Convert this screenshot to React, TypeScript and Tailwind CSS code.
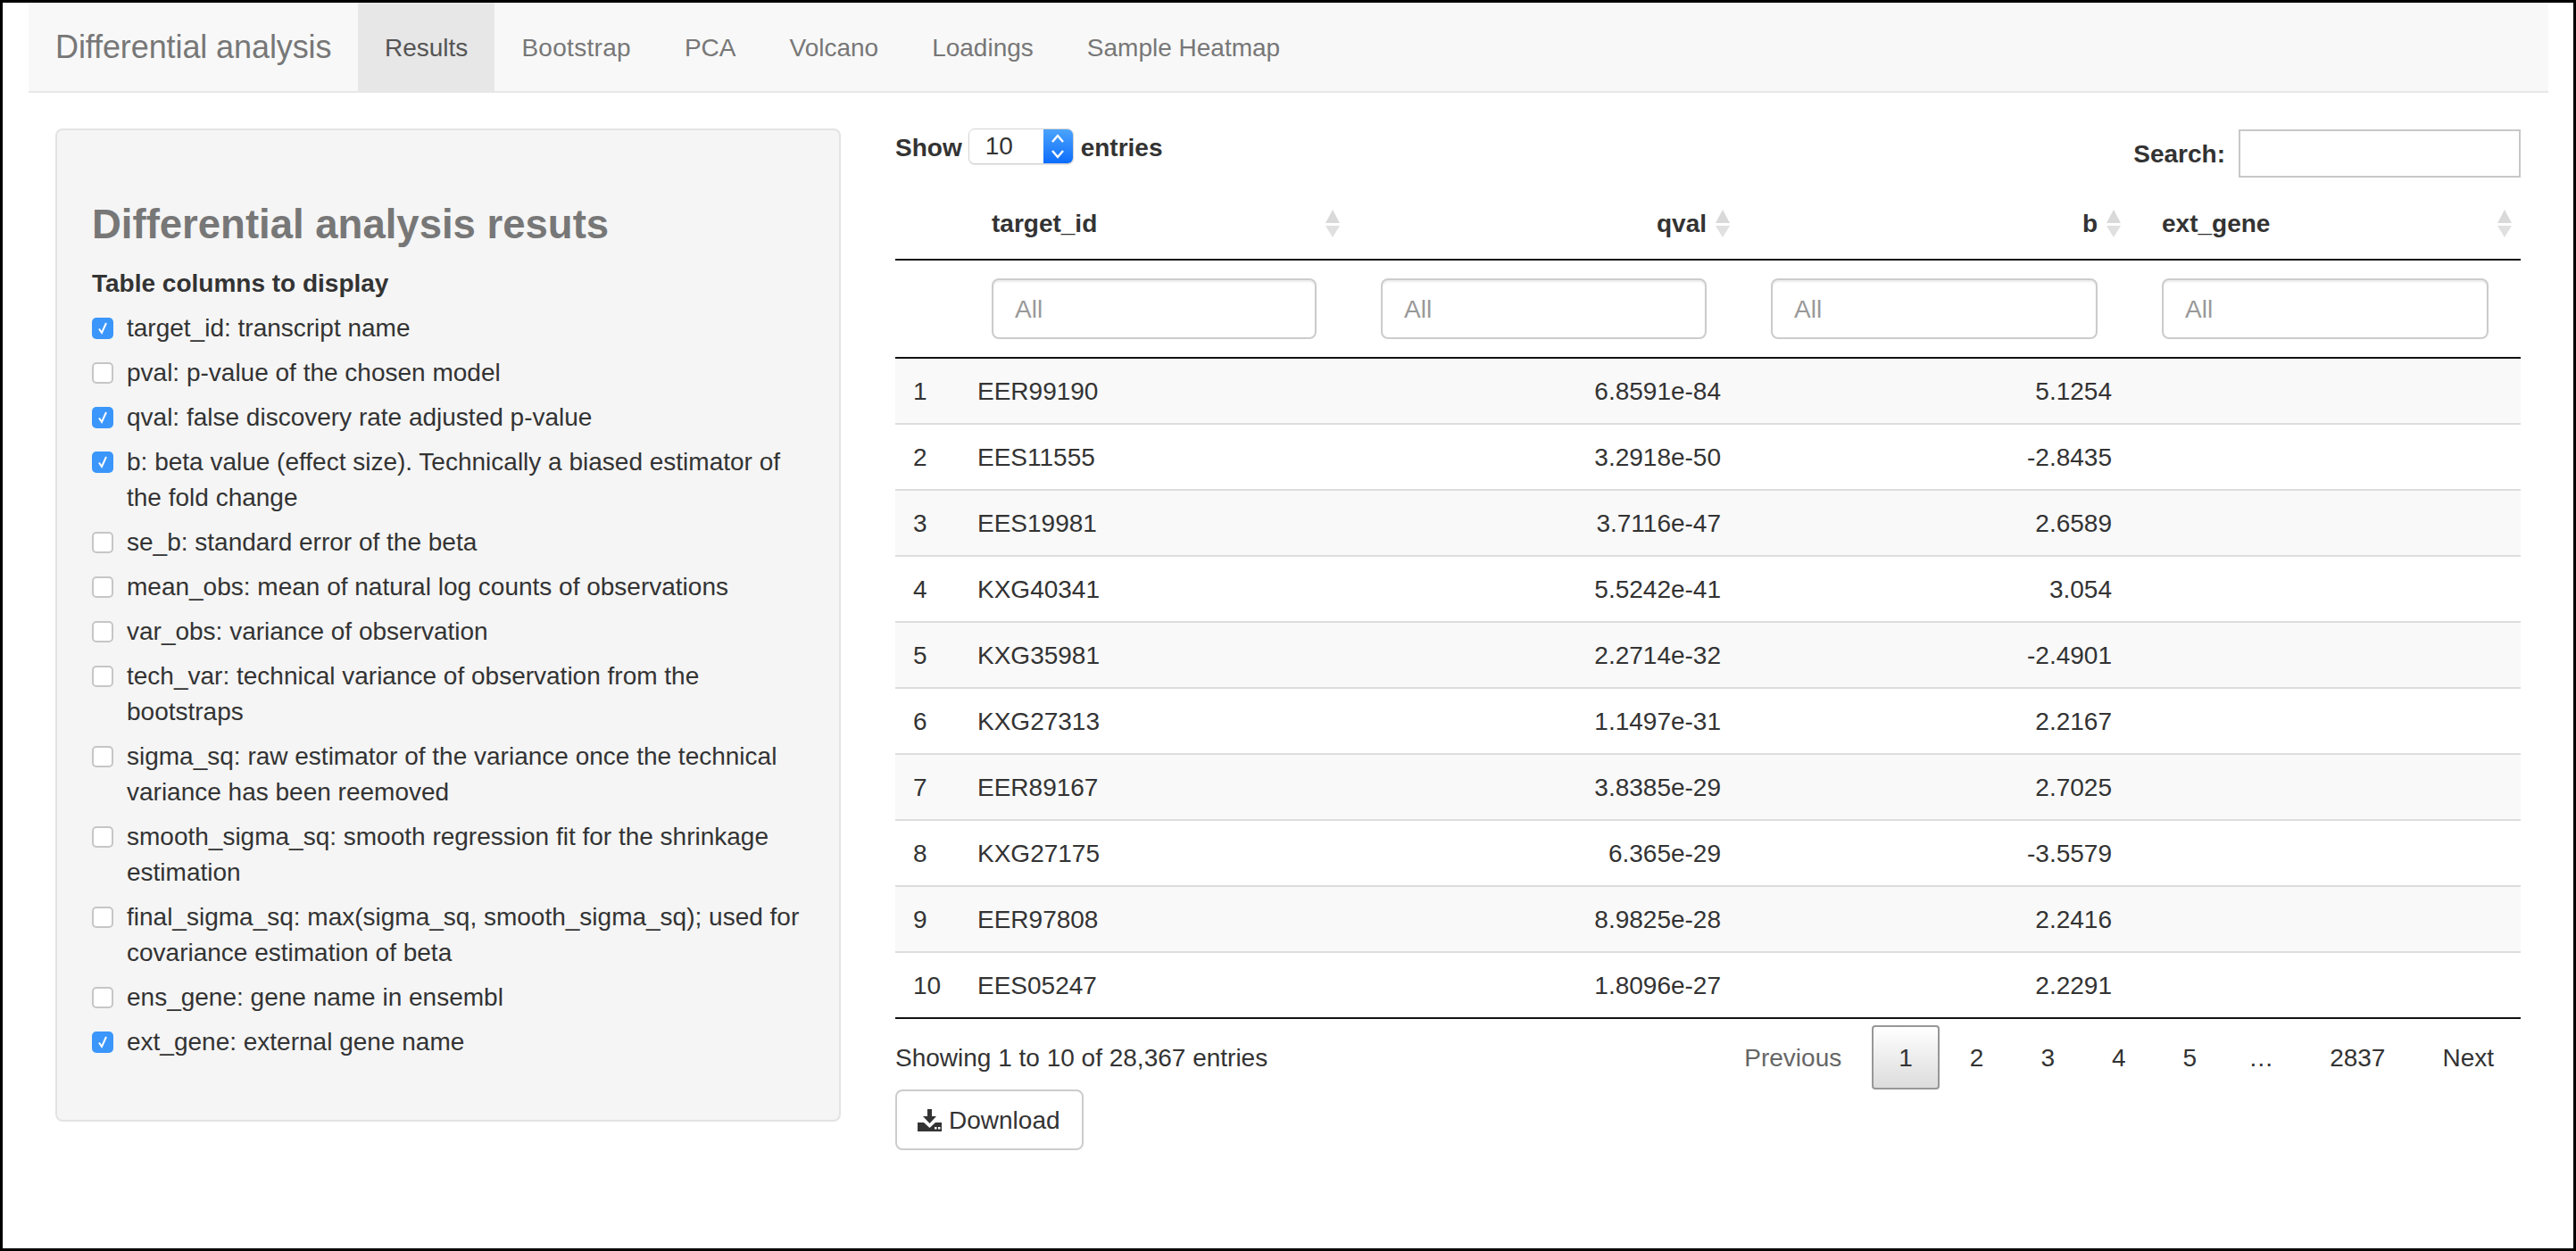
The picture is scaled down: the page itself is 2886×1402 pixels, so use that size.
import React from "react";

const tabs = ["Results", "Bootstrap", "PCA", "Volcano", "Loadings", "Sample Heatmap"];

const columns = [
  { text: "target_id: transcript name", checked: true },
  { text: "pval: p-value of the chosen model", checked: false },
  { text: "qval: false discovery rate adjusted p-value", checked: true },
  { text: "b: beta value (effect size). Technically a biased estimator of the fold change", checked: true },
  { text: "se_b: standard error of the beta", checked: false },
  { text: "mean_obs: mean of natural log counts of observations", checked: false },
  { text: "var_obs: variance of observation", checked: false },
  { text: "tech_var: technical variance of observation from the bootstraps", checked: false },
  { text: "sigma_sq: raw estimator of the variance once the technical variance has been reemoved", checked: false },
  { text: "smooth_sigma_sq: smooth regression fit for the shrinkage estimation", checked: false },
  { text: "final_sigma_sq: max(sigma_sq, smooth_sigma_sq); used for covariance estimation of beta", checked: false },
  { text: "ens_gene: gene name in ensembl", checked: false },
  { text: "ext_gene: external gene name", checked: true },
];

const rows = [
  ["EER99190", "6.8591e-84", "5.1254"],
  ["EES11555", "3.2918e-50", "-2.8435"],
  ["EES19981", "3.7116e-47", "2.6589"],
  ["KXG40341", "5.5242e-41", "3.054"],
  ["KXG35981", "2.2714e-32", "-2.4901"],
  ["KXG27313", "1.1497e-31", "2.2167"],
  ["EER89167", "3.8385e-29", "2.7025"],
  ["KXG27175", "6.365e-29", "-3.5579"],
  ["EER97808", "8.9825e-28", "2.2416"],
  ["EES05247", "1.8096e-27", "2.2291"],
];

const pages = ["2", "3", "4", "5"];

const SortArrows = () => (
  <svg
    className="absolute right-[10px] top-[23px]"
    width="16"
    height="31"
    viewBox="0 0 16 31"
  >
    <path d="M8 0L16 15H0Z" fill="#d9d9d9" />
    <path d="M0 18H16L8 31Z" fill="#e0e0e0" />
  </svg>
);

const Checkbox = ({ checked }: { checked: boolean }) =>
  checked ? (
    <span className="mt-[8px] flex h-[24px] w-[24px] shrink-0 items-center justify-center rounded-[5px] bg-[#3b96fb]">
      <svg width="14" height="16" viewBox="0 0 14 16">
        <path d="M3 8.5L6 13L11 2" fill="none" stroke="white" strokeWidth="2" />
      </svg>
    </span>
  ) : (
    <span className="mt-[8px] h-[24px] w-[24px] shrink-0 rounded-[5px] border-2 border-[#c6c6c6] bg-white" />
  );

const FilterInput = () => (
  <input
    placeholder="All"
    readOnly
    className="box-border h-[68px] w-full rounded-[8px] border-2 border-[#ccc] bg-white px-[24px] pt-[2px] text-[28px] shadow-[inset_0_2px_2px_rgba(0,0,0,0.075)] outline-none placeholder:text-[#999]"
  />
);

export default function App() {
  return (
    <div className="box-border h-[1402px] w-[2886px] overflow-hidden border-[3px] border-black bg-white font-['Liberation_Sans',Arial,sans-serif] text-[28px] leading-[40px] text-[#333]">
      <nav className="ml-[29px] mr-[28px] flex h-[101px] border-b-2 border-[#e7e7e7] bg-[#f8f8f8] text-[#777]">
        <span className="flex w-[369px] items-center whitespace-nowrap px-[30px] text-[36px] tracking-[-0.1px]">
          Differential analysis
        </span>
        {tabs.map((tab) => (
          <a
            key={tab}
            className={`flex h-[101px] items-center px-[30px] ${
              tab === "Results" ? "bg-[#e7e7e7] text-[#555]" : tab === "Bootstrap" ? "tracking-[0.3px]" : ""
            }`}
          >
            {tab}
          </a>
        ))}
      </nav>

      <main className="flex items-start gap-[61px] pl-[59px] pr-[59px] pt-[40px]">
        <aside className="box-border h-[1113px] w-[880px] shrink-0 rounded-[8px] border-2 border-[#e3e3e3] bg-[#f5f5f5] px-[39px] pt-[79px]">
          <h2 className="mb-[19px] text-[45.5px] font-bold leading-[53px] text-[#777]">
            Differential analysis resuts
          </h2>
          <p className="mb-[10px] pt-[1px] font-bold">Table columns to display</p>
          {columns.map((col) => (
            <label key={col.text} className="mb-[10px] flex gap-[15px]">
              <Checkbox checked={col.checked} />
              <span>{col.text}</span>
            </label>
          ))}
        </aside>

        <section className="min-w-0 flex-1">
          <div className="flex h-[68px] items-start justify-between">
            <div className="flex h-[44px] items-center font-bold">
              Show
              <div className="relative ml-[7px] mr-[8px] box-border flex h-[40px] w-[118px] items-center self-start overflow-hidden rounded-[7px] border border-[#d4d4d4] bg-white pl-[18px] font-normal shadow-[0_1px_1px_rgba(0,0,0,0.1)]">
                10
                <span className="absolute bottom-0 right-0 top-0 flex w-[33px] items-center justify-center bg-gradient-to-b from-[#4aa3fc] to-[#0a6cfa]">
                  <svg width="18" height="30" viewBox="0 0 18 30">
                    <path d="M3 10L9 3L15 10M3 20L9 27L15 20" fill="none" stroke="white" strokeWidth="2.4" />
                  </svg>
                </span>
              </div>
              entries
            </div>
            <div className="mt-[1px] flex items-center gap-[15px] font-bold">
              <span className="pt-[2px]">Search:</span>
              <input readOnly className="box-border h-[54px] w-[316px] border-2 border-[#c8c8c8] bg-white" />
            </div>
          </div>

          <table className="w-full table-fixed border-separate border-spacing-0">
            <colgroup>
              <col className="w-[72px]" />
              <col className="w-[436px]" />
              <col className="w-[437px]" />
              <col className="w-[438px]" />
              <col className="w-[438px]" />
            </colgroup>
            <thead>
              <tr>
                <th className="h-[80px] border-b-2 border-[#111]" />
                <th className="relative border-b-2 border-[#111] pl-[36px] pr-[36px] text-left font-bold">
                  target_id
                  <SortArrows />
                </th>
                <th className="relative border-b-2 border-[#111] pr-[36px] text-right font-bold">
                  qval
                  <SortArrows />
                </th>
                <th className="relative border-b-2 border-[#111] pr-[36px] text-right font-bold">
                  b
                  <SortArrows />
                </th>
                <th className="relative border-b-2 border-[#111] pl-[36px] text-left font-bold">
                  ext_gene
                  <SortArrows />
                </th>
              </tr>
              <tr>
                <td className="h-[110px] border-b-2 border-[#111]" />
                <td className="border-b-2 border-[#111] px-[36px]"><FilterInput /></td>
                <td className="border-b-2 border-[#111] px-[36px]"><FilterInput /></td>
                <td className="border-b-2 border-[#111] px-[36px]"><FilterInput /></td>
                <td className="border-b-2 border-[#111] px-[36px]"><FilterInput /></td>
              </tr>
            </thead>
            <tbody>
              {rows.map((row, i) => {
                const line = i === rows.length - 1 ? "border-[#111]" : "border-[#ddd]";
                return (
                  <tr key={row[0]} className={i % 2 === 0 ? "bg-[#f9f9f9]" : "bg-white"}>
                    <td className={`h-[74px] border-b-2 pl-[20px] pt-[2px] ${line}`}>{i + 1}</td>
                    <td className={`border-b-2 pl-[20px] pt-[2px] ${line}`}>{row[0]}</td>
                    <td className={`border-b-2 pr-[20px] pt-[2px] text-right ${line}`}>{row[1]}</td>
                    <td className={`border-b-2 pr-[20px] pt-[2px] text-right ${line}`}>{row[2]}</td>
                    <td className={`border-b-2 ${line}`} />
                  </tr>
                );
              })}
            </tbody>
          </table>

          <div className="flex h-[79px] items-start justify-between">
            <div className="pt-[24px]">Showing 1 to 10 of 28,367 entries</div>
            <div className="flex pt-[7px]">
              <a className="box-border border-2 border-transparent px-[28px] pb-[13px] pt-[15px] text-[#666]">Previous</a>
              <a className="ml-[4px] box-border rounded-[4px] border-2 border-[#979797] bg-gradient-to-b from-white to-[#dcdcdc] px-[28px] pb-[13px] pt-[15px]">
                1
              </a>
              {pages.map((p) => (
                <a key={p} className="ml-[4px] box-border border-2 border-transparent px-[28px] pb-[13px] pt-[15px]">
                  {p}
                </a>
              ))}
              <span className="box-border px-[28px] pb-[15px] pt-[17px]">…</span>
              <a className="ml-[5px] box-border border-2 border-transparent px-[28px] pb-[13px] pt-[15px]">2837</a>
              <a className="ml-[4px] box-border border-2 border-transparent px-[28px] pb-[13px] pt-[15px]">Next</a>
            </div>
          </div>

          <button className="box-border flex h-[68px] w-[211px] items-center gap-[8px] rounded-[8px] border-2 border-[#ccc] bg-white pl-[23px]">
            <svg width="27" height="25" viewBox="0 0 27 25">
              <path d="M11 0H16V8H21L13.5 16L6 8H11Z" fill="#333" />
              <path d="M0 15H7L13.5 21L20 15H27V25H0Z" fill="#333" />
              <rect x="19" y="20" width="2.5" height="2.5" fill="white" />
              <rect x="23" y="20" width="2.5" height="2.5" fill="white" />
            </svg>
            <span className="pt-[2px]">Download</span>
          </button>
        </section>
      </main>
    </div>
  );
}
